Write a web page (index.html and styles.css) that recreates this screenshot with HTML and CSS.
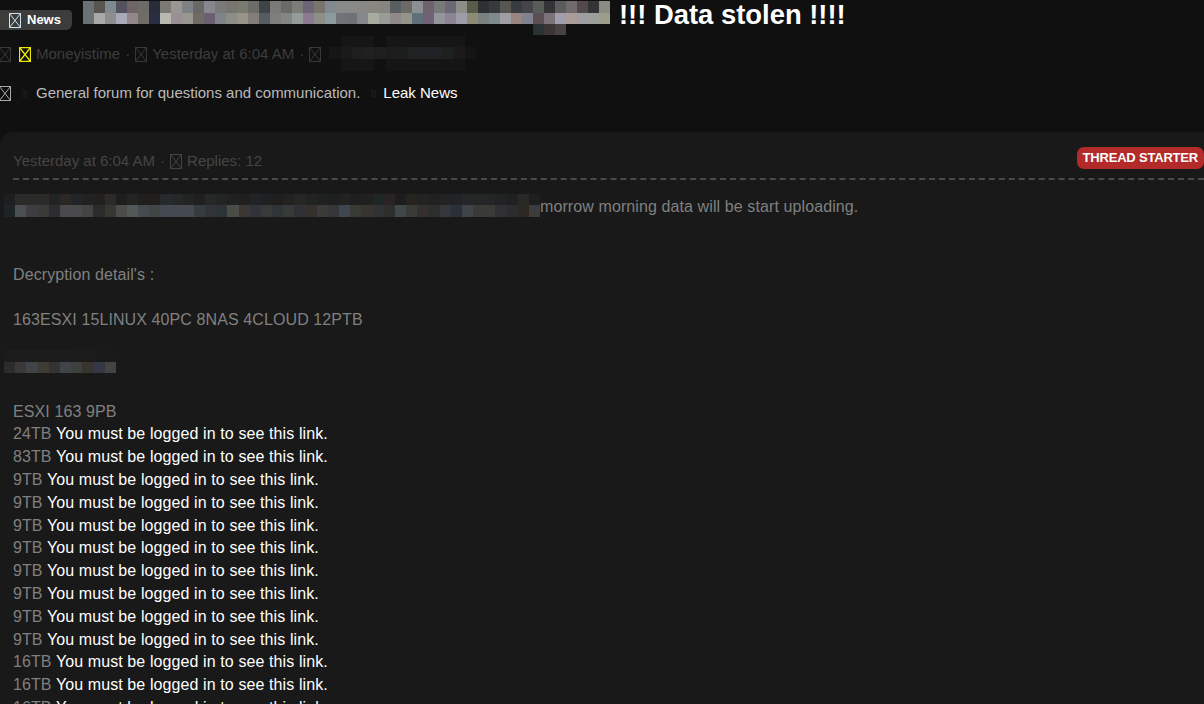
FILE: index.html
```html
<!DOCTYPE html>
<html lang="en">
<head>
  <meta charset="UTF-8" />
  <title>Data stolen</title>
  <link rel="stylesheet" href="styles.css">
</head>
<body>

  <svg class="sprite" width="0" height="0">
    <symbol id="broken" viewBox="0 0 12 15">
      <path d="M.5.5h11v14H.5zM.5.5l11 14M11.5.5l-11 14" fill="none" stroke="currentColor" />
    </symbol>
  </svg>

  <header class="thread-head">
    <div class="title-row">
      <span class="label"><svg class="ico"><use href="#broken" /></svg>News</span>
      <div class="mosaic mosaic-title" data-m="title">
        <div class="mosaic mosaic-tail" data-m="tail"></div>
      </div>
      <h1>!!! Data stolen !!!!</h1>
    </div>

    <div class="meta">
      <svg class="ico ico-clip"><use href="#broken" /></svg>
      <svg class="ico ico-user"><use href="#broken" /></svg>
      <span class="meta-name">Moneyistime</span>
      <span class="dot">·</span>
      <svg class="ico"><use href="#broken" /></svg>
      <span>Yesterday at 6:04 AM</span>
      <span class="dot">·</span>
      <svg class="ico"><use href="#broken" /></svg>
      <div class="mosaic mosaic-meta" data-m="meta"></div>
    </div>

    <nav class="crumbs">
      <svg class="ico ico-clip ico-home"><use href="#broken" /></svg>
      <svg class="ico-sep"><use href="#broken" /></svg>
      <a class="crumb-forum">General forum for questions and communication.</a>
      <svg class="ico-sep"><use href="#broken" /></svg>
      <a class="crumb-now">Leak News</a>
    </nav>
  </header>

  <article class="post">
    <div class="post-top">
      <span>Yesterday at 6:04 AM</span>
      <span class="dot">·</span>
      <svg class="ico"><use href="#broken" /></svg>
      <span>Replies: 12</span>
      <span class="starter">THREAD STARTER</span>
    </div>

    <div class="post-body">
      <div class="mosaic mosaic-line" data-m="line"></div>morrow morning data will be start uploading.<br>
      <br>
      <br>
      Decryption detail's :<br>
      <br>
      163ESXI 15LINUX 40PC 8NAS 4CLOUD 12PTB<br>
      <br>
      <div class="mosaic mosaic-short" data-m="short"></div><br>
      <br>
      ESXI 163 9PB<br>
      24TB <a>You must be logged in to see this link.</a><br>
      83TB <a>You must be logged in to see this link.</a><br>
      9TB <a>You must be logged in to see this link.</a><br>
      9TB <a>You must be logged in to see this link.</a><br>
      9TB <a>You must be logged in to see this link.</a><br>
      9TB <a>You must be logged in to see this link.</a><br>
      9TB <a>You must be logged in to see this link.</a><br>
      9TB <a>You must be logged in to see this link.</a><br>
      9TB <a>You must be logged in to see this link.</a><br>
      9TB <a>You must be logged in to see this link.</a><br>
      16TB <a>You must be logged in to see this link.</a><br>
      16TB <a>You must be logged in to see this link.</a><br>
      16TB <a>You must be logged in to see this link.</a>
    </div>
  </article>

  <script src="script.js"></script>
</body>
</html>
```

FILE: styles.css
```css
html, body { height: 100%; overflow: hidden; }
body { font-family: "Liberation Sans", Arial, sans-serif; font-size: 15px; line-height: 1.5; margin: 0; background-color: #101010; color: #777; }
a { color: #fff; }
.sprite { position: absolute; }

.thread-head { height: 132px; }
.title-row { display: flex; align-items: flex-start; height: 35px; }
.label {
  display: flex; align-items: center; gap: 6px; height: 20px; width: 72px; box-sizing: border-box;
  margin: 10px 11px 0 0; padding-left: 9px;
  background-color: #3c3c3c; border-radius: 0 4px 6px 0;
  color: #fff; font-size: 13px; font-weight: bold; line-height: 20px;
}
.label .ico { color: #cfe2f0; }
h1 { margin: -1px 0 0 9px; color: #fff; font-size: 27.4px; line-height: 32px; font-weight: bold; }

.ico { display: block; flex: none; width: 12px; height: 15px; }
.ico-sep { display: block; flex: none; width: 5px; height: 7px; color: #2c2c2c; }
.ico-clip { margin-left: -1px; }

.meta { display: flex; align-items: center; height: 38px; margin-bottom: 1px; color: #3d3d3d; gap: 5px; }
.meta .ico { color: #383838; }
.meta .ico-user { color: #e8e800; margin-left: 3px; stroke-width: 1.3; }
.dot { color: #3d3d3d; }
.mosaic-meta { margin: -2px 0 0 3px; }

.crumbs { display: flex; align-items: center; height: 38px; margin-top: 1px; }
.ico-home { color: #aaa; }
.crumbs .ico-sep:first-of-type { margin-left: 12px; }
.crumb-forum { color: #bbb; margin-left: 9px; }
.crumbs .ico-sep { margin-left: 11px; }
.crumb-now { margin-left: 7px; }

.post { background-color: #191919; border-radius: 14px 0 0 0; padding: 0 0 0 13px; height: 572px; }
.post-top {
  display: flex; align-items: center; gap: 5px; height: 48px; padding-top: 13px;
  border-bottom: 2px dashed #4a4a4a; color: #454545; box-sizing: border-box;
}
.post-top .dot { color: #454545; }
.post-top .ico { color: #454545; }
.starter {
  margin: -8px 0 0 auto; padding: 0 6px; height: 22px; line-height: 21px;
  background-color: #b22a2a; border-radius: 7px;
  color: #fff; font-size: 13px; font-weight: bold; letter-spacing: -.2px;
}
.post-body { padding-top: 15.5px; color: #808080; font-size: 16px; line-height: 22.8px; letter-spacing: .1px; }

.mosaic { display: grid; }
.mosaic span { display: block; }
.mosaic-title { position: relative; flex: none; width: 527px; height: 23px; margin-top: 1px; grid-template-columns: repeat(48, 1fr); }
.mosaic-tail { position: absolute; left: 450px; top: 23px; width: 33px; height: 11px; grid-template-columns: repeat(3, 1fr); }
.mosaic-meta { flex: none; width: 147px; height: 35px; grid-template-columns: repeat(13, 1fr); }
.mosaic-line { display: inline-grid; vertical-align: top; width: 536px; height: 23px; margin: -2px 0 0 -9px; grid-template-columns: repeat(48, 1fr); }
.mosaic-short { display: inline-grid; vertical-align: top; width: 112px; height: 23px; margin: -5px 0 -5px -9px; grid-template-columns: repeat(10, 1fr); }
```

FILE: script.js
```js
// colours of the pixelated (blurred out) pieces, row after row
const mosaics = {
  title: [
    "#6b7275 #58554f #7e8a90 #54525f #6f6566 #6f6c67 #292c3a #7b7b73 #9c9692 #7d8385 #696867 #8a8690 #7a7a7a #77756f #7a7a6e #6c6c68 #3f4446 #7c7a77 #6a6a6a #7c7d78 #6c6577 #78756e #808a90 #868a8a",
    "#888a88 #8a8884 #888880 #86857f #585e62 #6c6a64 #8a9094 #6f6270 #777a78 #6c6876 #8e8e88 #5a5a48 #2e3032 #363a3a #585650 #363c40 #44444a #585c58 #343436 #5a5c5e #706c6c #524a4a #343434 #8c8c84",
    "#6b7275 #a8a8a8 #8e8e8e #a9a9b8 #948688 #706c68 #2a2e42 #b8b8b0 #9a8f95 #97978f #6f6a62 #6a5f70 #80848a #8c8e86 #989488 #827f7a #565c62 #7e7e7a #848684 #959a9a #8a7a90 #8e8e88 #8a9a9e #707478",
    "#6e7276 #85888a #a8ac9e #9a9c98 #8f8a8a #94948a #5f7078 #6e6274 #92969a #8a8494 #9e9ca8 #8c8c72 #7a8280 #7e8a8e #9e9ea4 #9a8480 #80828f #5a5054 #7a7278 #a09eac #aa9a98 #9e9ea0 #9c9e9a #9c9e8a"
  ],
  tail: ["#2a3234 #3a3634 #484244"],
  meta: [
    "- #161616 #161616 #161616 - #161616 #161616 #161616 #161616 #161616 #161616 #161616 -",
    "#161616 #1a1a1a #1e1e1e #202020 #1e1e1e #1c1c1c #1c1e1e #202222 #1e2224 #1e2224 #1e2020 #1c1a18 #141414",
    "- #161616 #161616 #161616 - #151515 #151515 #151515 #151515 #151515 #151515 #151515 -"
  ],
  line: [
    "#1d1e1f #2a2a2a #2b2b2a #2c2b29 #202424 #2a2725 #20252a #242220 #222120 #2c2b28 #1e1e1e #242424 #201f1e #201f1e #262a2e #252829 #222424 #1f1f1f #242826 #232524",
    "#212121 #1f1f1f #212226 #1e2022 #201f1e #232222 #262725 #212222 #1f2020 #1e2020 #242221 #201f20 #1f2120 #1f2626 #292326 #1d1d1d #25241f #222322 #212122 #232323",
    "#212427 #242628 #252626 #232527 #202224 #1f2020 #282826 #1e1e1e",
    "#1e2426 #4a5052 #3e3e40 #3a3a38 #2e2c30 #4a4a4c #484a4c #444444 #2c2c2c #363632 #4c4c4a #525858 #444a4e #404646 #454a52 #454a50 #454a50 #363c40 #30343a #2c3438 #4a4c48 #3c3634 #32323a #383a38",
    "#2e3438 #383a38 #2e3236 #34302c #3a3a38 #363638 #404650 #383a36 #38342f #303236 #2e2e2c #40484c #3a3a36 #36302c #2c2e2e #34383c #2a3038 #3e4448 #3a3a36 #3a3a38 #303032 #2a2c30 #2c2824 #3c3c3c"
  ],
  short: [
    "#1c1c1c #1c1c1c #1c1c1c #1c1c1c #1c1c1c #1c1c1c #1b1b1b #1b1b1b #1a1a1a #1a1a1a",
    "#2a2c2e #3a3838 #404448 #3e3a34 #343234 #3e4448 #3e403e #383430 #343844 #444442"
  ]
};

document.querySelectorAll(".mosaic").forEach(function (box) {
  const rows = mosaics[box.dataset.m].join(" ").split(" ");
  const first = box.firstChild;
  rows.forEach(function (colour) {
    const cell = document.createElement("span");
    if (colour !== "-") cell.style.background = colour;
    box.insertBefore(cell, first);
  });
});
```
